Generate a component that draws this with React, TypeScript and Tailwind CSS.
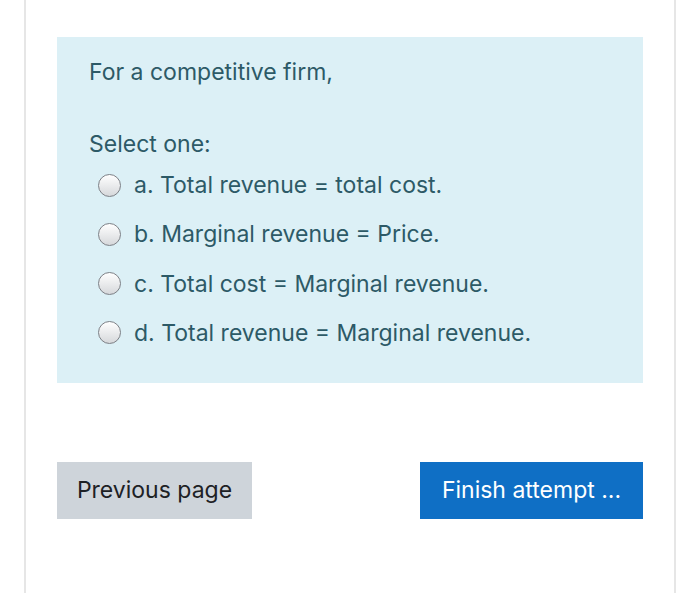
import React from "react";

const options = [
  "a. Total revenue = total cost.",
  "b. Marginal revenue = Price.",
  "c. Total cost = Marginal revenue.",
  "d. Total revenue = Marginal revenue.",
];

const Radio = () => (
  <span className="w-[23px] h-[23px] rounded-full border-[1.5px] border-[#7d8086] bg-gradient-to-b from-white to-[#d6d8db] shrink-0" />
);

export default function App() {
  return (
    <div
      className="w-[700px] h-[593px] bg-white overflow-hidden"
      style={{ fontFamily: "Inter, 'Liberation Sans', sans-serif" }}
    >
      <div className="ml-[24px] w-[652px] h-full border-x-2 border-[#e6e6e6] px-[31px] pt-[37px]">
        <div className="bg-[#dcf0f6] text-[#2d5a67] pl-[32px] pt-[19px] h-[346px] text-[23px]">
          <p className="leading-[32px]">For a competitive firm,</p>
          <p className="mt-[40px] leading-[32px]">Select one:</p>
          <div className="mt-[9px] flex flex-col gap-[17.3px]">
            {options.map((o) => (
              <label key={o} className="flex items-center gap-[13px] pl-[9px] leading-[32px]">
                <Radio />
                <span>{o}</span>
              </label>
            ))}
          </div>
        </div>
        <div className="mt-[79px] flex justify-between">
          <button className="w-[195px] h-[57px] bg-[#ced4da] text-[#1d2125] text-[23px]">
            Previous page
          </button>
          <button className="w-[223px] h-[57px] bg-[#0f6fc5] text-white text-[23px]">
            Finish attempt ...
          </button>
        </div>
      </div>
    </div>
  );
}
